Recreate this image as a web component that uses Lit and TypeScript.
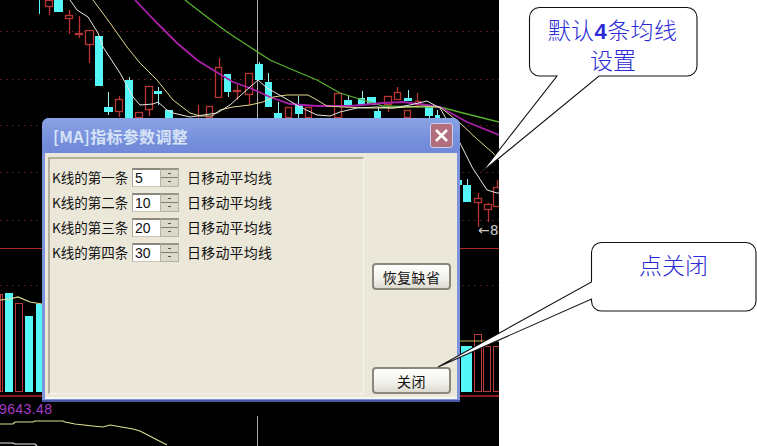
import { LitElement, html, css, svg } from "lit";
import { customElement } from "lit/decorators.js";

type C = [number, number, number, number, number, number, number];
// left, right, body top, body bottom, wick x, wick top, wick bottom
const RED: C[] = [
  [45, 53, 0, 7, 49, 0, 15],
  [65, 73, 15, 19, 69, 10, 34],
  [75, 83, 33, 35, 79, 16, 38],
  [85, 94, 30, 45, 89, 30, 63],
  [115, 123, 99, 112, 119, 96, 117],
  [135, 143, 112, 118, 139, 112, 118],
  [145, 153, 86, 110, 149, 86, 116],
  [198, 198, 105, 118, 198, 105, 118],
  [206, 213, 106, 118, 209, 106, 118],
  [215, 222, 67, 98, 219, 58, 98],
  [233, 241, 90, 92, 237, 85, 100],
  [245, 253, 73, 95, 249, 73, 105],
  [285, 292, 107, 118, 288, 107, 118],
  [305, 312, 107, 118, 308, 107, 118],
  [334, 342, 93, 118, 338, 93, 118],
  [384, 392, 96, 105, 388, 96, 112],
  [394, 401, 92, 100, 397, 87, 100],
  [404, 411, 110, 118, 408, 110, 118],
  [415, 421, 101, 105, 417, 93, 108],
  [474, 482, 198, 203, 478, 193, 227],
  [484, 492, 204, 210, 488, 203, 222],
  [493, 500, 187, 207, 497, 180, 207],
];
const CYAN: C[] = [
  [39, 40, 0, 14, 39, 0, 14],
  [54, 63, 0, 12, 58, 0, 12],
  [95, 103, 36, 86, 99, 36, 86],
  [104, 113, 107, 112, 108, 92, 115],
  [125, 133, 80, 118, 129, 77, 118],
  [154, 162, 91, 94, 158, 87, 105],
  [165, 173, 110, 118, 169, 110, 118],
  [224, 231, 74, 92, 228, 74, 97],
  [255, 263, 64, 80, 259, 62, 80],
  [265, 272, 82, 107, 268, 73, 107],
  [274, 282, 113, 118, 278, 102, 118],
  [295, 303, 105, 114, 298, 96, 118],
  [344, 352, 100, 105, 348, 95, 105],
  [358, 365, 98, 105, 362, 91, 105],
  [368, 376, 97, 105, 367, 97, 105],
  [374, 381, 111, 118, 378, 107, 118],
  [404, 412, 98, 101, 408, 90, 101],
  [425, 433, 106, 116, 429, 106, 118],
  [435, 440, 115, 118, 437, 110, 118],
  [459, 462, 180, 185, 460, 180, 185],
  [463, 471, 185, 202, 467, 179, 202],
];
const VOL_CYAN: [number, number, number][] = [
  [5, 13, 293], [25, 33, 316], [36, 43, 304], [461, 472, 346],
];
const VOL_RED: [number, number, number][] = [
  [0, 3, 294], [15, 23, 303], [474, 482, 334], [483, 491, 346], [493, 500, 346],
];
const LINES: { c: string; w: number; p: string }[] = [
  { c: "#58b030", w: 1.3, p: "185,0 207,17 227,32 250,47 270,60 293,70 317,80 340,93 363,100 383,106 417,107 440,107 463,113 499,122" },
  { c: "#a820a8", w: 1.8, p: "135,0 157,23 177,43 197,60 213,70 233,82 250,88 270,97 290,104 317,106 350,106 383,103 403,102 427,105 440,107 467,122 499,135" },
  { c: "#e0d88c", w: 1, p: "93,0 110,23 127,47 140,63 157,80 173,100 190,113 200,116 212,116 220,110 233,107 250,105 263,102 273,97 287,95 308,95 317,100 327,106 343,107 367,108 393,108 407,107 423,106 440,107 460,123 477,139 493,153 499,160" },
  { c: "#e8e8e0", w: 1, p: "70,0 77,10 88,17 98,33 103,47 120,73 133,97 140,105 153,104 158,102 167,110 173,113 190,117 217,113 230,105 250,87 258,80 267,88 283,97 300,107 317,115 330,116 340,112 357,108 377,107 393,108 410,105 427,101 440,108 460,143 472,167 487,190 497,193 499,193" },
  { c: "#e0e090", w: 1.2, p: "0,300 10,299 18,297 30,302 42,304" },
  { c: "#c8b850", w: 1.2, p: "460,341 499,341" },
  { c: "#e0e090", w: 1.1, p: "0,424 13,424 15,422 33,422 35,421 63,421 65,422 75,424 93,426 103,427 110,425 133,429 140,431 167,445" },
  { c: "#e8e8e8", w: 1.2, p: "0,443 13,443 15,444 35,444 37,446" },
];
const DOTTED = [31, 79, 125, 172, 220, 285];
const ROWS = [
  { label: "K线的第一条", value: "5" },
  { label: "K线的第二条", value: "10" },
  { label: "K线的第三条", value: "20" },
  { label: "K线的第四条", value: "30" },
];

@customElement("app-root")
export class AppRoot extends LitElement {
  static styles = css`
    :host { display: block; }
    .page {
      position: relative; width: 757px; height: 446px; overflow: hidden;
      background: #fff; font-family: "Noto Sans CJK SC", "Liberation Sans", sans-serif;
    }
    .chart { display: block; width: 499px; height: 446px; background: #000; }
    .vol-text { font: 14px "Liberation Sans", sans-serif; fill: #a83cc8; letter-spacing: 0.4px; }
    .mark-text { font: 14px "DejaVu Sans", sans-serif; fill: #c8c8c8; }

    .dialog {
      position: absolute; left: 42px; top: 118px; width: 418px; height: 284px;
      box-sizing: border-box; display: flex; flex-direction: column;
      background: #7d93dc; border-radius: 7px 7px 0 0;
      border-bottom: 2px solid #4a55a8; padding: 0 3px 1px;
    }
    .titlebar {
      flex: none; height: 35px; display: flex; align-items: center;
      justify-content: space-between; padding: 0 4px 0 11px;
      background: linear-gradient(#8aa2e4, #7690dc 60%, #7088d8);
      margin: 0 -3px; border-radius: 7px 7px 0 0;
    }
    .title {
      color: #d6e2f6; font-size: 16px; font-weight: 700; letter-spacing: 0.3px;
      line-height: 20px;
    }
    .close {
      width: 23px; height: 25px; box-sizing: border-box; margin-right: 3px;
      display: flex; align-items: center; justify-content: center;
      background: #b26e7c; border: 1px solid #c8d0ec; border-radius: 3px;
    }
    .body {
      flex: 1; display: flex; background: #ebe8d9; padding: 4px 0 3px 3px;
      border-bottom: 2px solid #f6f5ee; min-height: 0;
    }
    .group {
      width: 316px; box-sizing: border-box; padding: 8px 0 0 2px;
      border: 1px solid #f6f5ee; border-top: 2px solid #b5b09c;
      border-left: 2px solid #b5b09c; display: flex; flex-direction: column; gap: 5px;
    }
    .row { display: flex; align-items: center; height: 20px; color: #111; font-size: 14px; }
    .label { width: 80px; font-size: 13.5px; white-space: nowrap; }
    .unit { letter-spacing: 0.2px; }
    .input {
      width: 28px; height: 19px; box-sizing: border-box; background: #fff;
      border-top: 2px solid #8a887c; border-left: 1px solid #a8a698;
      border-bottom: 1px solid #c8c5b4; padding-left: 2px;
      font: 14px/17px "Liberation Sans", sans-serif; color: #111;
    }
    .spin {
      width: 19px; height: 19px; box-sizing: border-box; display: flex;
      flex-direction: column; background: #dcd9ca; border: 1px solid #b4b2a2;
      border-top: 2px solid #97958a; margin-right: 8px;
    }
    .spin span { flex: 1; display: flex; align-items: center; justify-content: center; }
    .spin span + span { border-top: 1px solid #7f7e74; }
    .spin i { width: 3px; height: 1px; background: #55544c; }
    .side {
      flex: 1; display: flex; flex-direction: column; align-items: center;
      justify-content: space-between; padding: 106px 0 0 2px;
    }
    .btn {
      width: 79px; height: 27px; box-sizing: border-box; display: flex;
      align-items: center; justify-content: center; border: 2px solid #8a887a;
      border-radius: 4px; font-size: 14px; color: #111; letter-spacing: 0.4px;
      background: linear-gradient(#fff, #f3f2ec 55%, #dcdad0);
    }

    .overlay { position: absolute; left: 0; top: 0; width: 757px; height: 446px; }
    .note {
      position: absolute; box-sizing: border-box; text-align: center;
      color: #2a2ad6; font-size: 23px; font-weight: 300; line-height: 28px;
    }
    .note-a { left: 529px; top: 15px; width: 168px; }
    .note-b { left: 591px; top: 250px; width: 165px; }
    .first { white-space: nowrap; letter-spacing: 0.4px; margin-left: -1px; }
    .first b { font: 700 22px "Liberation Sans", sans-serif; }
  `;

  private chart() {
    return html`<svg class="chart" viewBox="0 0 499 446">
      ${DOTTED.map((y) => svg`<line x1="0" x2="499" y1=${y + 0.5} y2=${y + 0.5} stroke="#6a2020" stroke-dasharray="1.5 4.5" />`)}
      <line x1="0" x2="499" y1="248.5" y2="248.5" stroke="#a82828" />
      <line x1="0" x2="499" y1="396" y2="396" stroke="#8a1c1c" stroke-width="2" />
      <line x1="257.5" x2="257.5" y1="0" y2="120" stroke="#b0b0b0" />
      <line x1="257.5" x2="257.5" y1="416" y2="446" stroke="#a8a8a8" />
      ${VOL_CYAN.map(([a, b, t]) => svg`<rect x=${a} y=${t} width=${b - a} height=${392 - t} fill="#55f6f6" />`)}
      ${VOL_RED.map(([a, b, t]) => svg`<rect x=${a + 0.5} y=${t + 0.5} width=${b - a - 1} height=${391 - t} fill="none" stroke="#b83a3a" />`)}
      ${RED.map(([a, b, t, d, x, wt, wd]) => svg`<line x1=${x + 0.5} x2=${x + 0.5} y1=${wt} y2=${wd} stroke="#b83434" stroke-width="1.3" />
          <rect x=${a + 0.5} y=${t + 0.5} width=${b - a - 1} height=${d - t - 1} fill="#000" stroke="#b83434" stroke-width="1.3" />`)}
      ${CYAN.map(([a, b, t, d, x, wt, wd]) => svg`<line x1=${x + 0.5} x2=${x + 0.5} y1=${wt} y2=${wd} stroke="#9ceeee" />
        <rect x=${a} y=${t} width=${b - a} height=${d - t} fill="#55f6f6" />`)}
      ${LINES.map((l) => svg`<polyline points=${l.p} fill="none" stroke=${l.c} stroke-width=${l.w} />`)}
      <text class="vol-text" x="-1" y="414">9643.48</text>
      <text class="mark-text" x="478" y="235">←8</text>
    </svg>`;
  }

  render() {
    return html`<div class="page">
      ${this.chart()}
      <div class="dialog">
        <div class="titlebar">
          <span class="title">[MA]指标参数调整</span>
          <span class="close">
            <svg width="15" height="15" viewBox="0 0 15 15"><path d="M2 2 13 13M13 2 2 13" stroke="#fff" stroke-width="2.6" /></svg>
          </span>
        </div>
        <div class="body">
          <div class="group">
            ${ROWS.map((r) => html`<div class="row">
              <span class="label">${r.label}</span>
              <span class="input">${r.value}</span>
              <span class="spin"><span><i></i></span><span><i></i></span></span>
              <span class="unit">日移动平均线</span>
            </div>`)}
          </div>
          <div class="side">
            <div class="btn">恢复缺省</div>
            <div class="btn">关闭</div>
          </div>
        </div>
      </div>
      <svg class="overlay" viewBox="0 0 757 446">
        <path d="M539.5 7.5H687a10 10 0 0 1 10 10V66a10 10 0 0 1-10 10H599L482 172 557 76H539.5a10 10 0 0 1-10-10V17.5a10 10 0 0 1 10-10Z" fill="#fff" stroke="#111" stroke-width="1.1" />
        <path d="M601.5 242.5H746a10 10 0 0 1 10 10V301a10 10 0 0 1-10 10H601.5a10 10 0 0 1-10-10V299L438 367 591.5 282V252.5a10 10 0 0 1 10-10Z" fill="#fff" stroke="#111" stroke-width="1.1" />
      </svg>
      <div class="note note-a"><div class="first">默认<b>4</b>条均线</div><div>设置</div></div>
      <div class="note note-b">点关闭</div>
    </div>`;
  }
}
